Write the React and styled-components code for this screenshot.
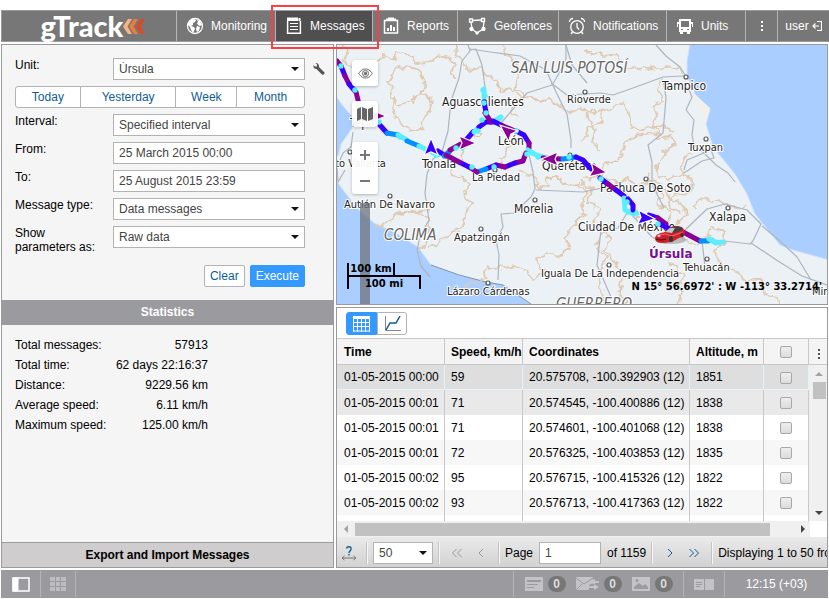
import React, { useState } from 'react';
import styled, { createGlobalStyle, css } from 'styled-components';

const colors = {
  bar: '#777777',
  barActive: '#4f4f4f',
  frame: '#9b9b9f',
  field: '#b3b3b3',
  panel: '#f5f5f5',
  link: '#0f5c96',
  blue: '#3399ff',
  mark: '#fa4141',
};

const GlobalStyle = createGlobalStyle`
  * {
    box-sizing: border-box;
  }
  body {
    margin: 0;
    background: #fff;
    color: #000;
    font: 12px/14px 'Liberation Sans', Arial, sans-serif;
  }
  button, input, select {
    font: inherit;
    margin: 0;
  }
`;

const Page = styled.div`
  display: flex;
  flex-direction: column;
  gap: 2px;
  height: 100vh;
  padding: 10px 0 1px 1px;
`;

/* ---- top bar ---- */

const Header = styled.header`
  display: flex;
  flex: none;
  height: 32px;
  background: ${colors.bar};
  border: solid ${colors.frame};
  border-width: 1px 0 1px 1px;
`;

const Logo = styled.div`
  flex: 1;
  display: flex;
  align-items: center;
  justify-content: center;
  padding-left: 8px;
  color: #fff;
  font: 900 29px/28px Lato, sans-serif;
`;

const Nav = styled.nav`
  display: flex;
`;

const NavItem = styled.a`
  position: relative;
  display: flex;
  align-items: center;
  gap: 7px;
  width: ${p => p.$width}px;
  padding-left: 9px;
  border-left: 1px solid #b5b5b5;
  background: ${p => (p.$active ? colors.barActive : 'transparent')};
  color: #fff;
  text-decoration: none;
  white-space: nowrap;
  svg {
    flex: none;
  }
  ${p =>
    p.$center &&
    css`
      justify-content: center;
      padding: 0;
      gap: 3px;
    `}
`;

const Highlight = styled.span`
  position: absolute;
  inset: -6px -7px -8px -5px;
  border: 2px solid ${colors.mark};
  pointer-events: none;
  z-index: 5;
`;

/* ---- left column ---- */

const Main = styled.main`
  flex: 1;
  min-height: 0;
  display: grid;
  grid-template-columns: 333px minmax(0, 1fr);
  gap: 2px;
  padding-right: 1px;
`;

const Side = styled.aside`
  display: flex;
  flex-direction: column;
  border: 1px solid ${colors.frame};
  background: ${colors.panel};
`;

const Form = styled.form`
  display: grid;
  grid-template-columns: 98px 1fr 28px;
  grid-auto-rows: 22px;
  row-gap: 6px;
  padding: 13px 0 24px 13px;
`;

const Label = styled.label`
  grid-column: 1;
  padding-right: 8px;
`;

const SelectBox = styled.span`
  position: relative;
  display: flex;
  flex: none;
  width: ${p => (p.$width ? `${p.$width}px` : 'auto')};
  height: 22px;
  &::after {
    content: '';
    position: absolute;
    right: 6px;
    top: 9px;
    border: 4px solid transparent;
    border-top-color: #111;
    border-bottom: 0;
    pointer-events: none;
  }
`;

const fieldStyle = css`
  width: 100%;
  height: 22px;
  padding: 0 5px;
  border: 1px solid ${colors.field};
  border-radius: 0;
  background: #fff;
  color: #444;
`;

const Select = styled.select`
  ${fieldStyle}
  appearance: none;
`;

const TextInput = styled.input`
  ${fieldStyle}
`;

const ToolButton = styled.button`
  display: flex;
  align-items: center;
  justify-content: center;
  padding: 0;
  border: 0;
  background: none;
`;

const Periods = styled.div`
  grid-column: 1 / 3;
  display: grid;
  grid-template-columns: 64fr 96fr 61fr 68fr;
  border: 1px solid ${colors.field};
  border-radius: 3px;
  background: #fff;
  button {
    padding: 0;
    border: 0;
    background: none;
    color: ${colors.link};
  }
  button + button {
    border-left: 1px solid ${colors.field};
  }
`;

const Actions = styled.div`
  grid-column: 1 / 3;
  display: flex;
  justify-content: flex-end;
  gap: 5px;
  padding-top: 11px;
`;

const Button = styled.button`
  flex: none;
  height: 22px;
  padding: 0 5px;
  border: 1px solid ${p => (p.$primary ? colors.blue : colors.field)};
  border-radius: 2px;
  background: ${p => (p.$primary ? colors.blue : '#fff')};
  color: ${p => (p.$primary ? '#fff' : colors.link)};
`;

const SectionTitle = styled.h2`
  margin: 0;
  font-size: 12px;
  line-height: 25px;
  text-align: center;
  background: ${colors.frame};
  color: #fff;
`;

const ExportTitle = styled(SectionTitle)`
  margin-top: auto;
  border-top: 1px solid ${colors.frame};
  background: #cfcdce;
  color: #000;
  line-height: 24px;
`;

const Stats = styled.dl`
  display: grid;
  grid-template-columns: 97px 96px;
  margin: 0;
  padding: 10px 13px;
  line-height: 20px;
  white-space: nowrap;
  dd {
    margin: 0;
    text-align: right;
  }
`;

/* ---- map ---- */

const Right = styled.div`
  display: grid;
  grid-template-rows: minmax(0, 1fr) minmax(0, 1fr);
  gap: 2px;
  min-height: 0;
`;

const MapPanel = styled.section`
  position: relative;
  border: 1px solid ${colors.frame};
  overflow: hidden;
`;

const MapDrawing = styled.svg`
  display: block;
  width: 100%;
  height: 100%;
`;

const MapTools = styled.div`
  position: absolute;
  top: 15px;
  left: 15px;
  display: flex;
  flex-direction: column;
  gap: 15px;
`;

const MapToolGroup = styled.div`
  display: flex;
  flex-direction: column;
  width: 26px;
  border-radius: 3px;
  background: rgba(255, 255, 255, 0.93);
  box-shadow: 0 1px 3px rgba(0, 0, 0, 0.25);
  button {
    height: 26px;
  }
`;

const ZoomTrack = styled.div`
  position: absolute;
  left: 23px;
  top: 158px;
  bottom: 0;
  width: 10px;
  background: rgba(110, 115, 125, 0.75);
`;

const Scale = styled.div`
  position: absolute;
  left: 10px;
  bottom: 15px;
  font: bold 10px/11px 'DejaVu Sans', Verdana, sans-serif;
`;

const ScaleKm = styled.div`
  width: 48px;
  height: 12px;
  border: solid #000;
  border-width: 0 2px;
  text-align: center;
`;

const ScaleMi = styled.div`
  width: 74px;
  height: 14px;
  padding-top: 1px;
  border: 2px solid #000;
  border-bottom: 0;
  text-align: center;
`;

const Position = styled.div`
  position: absolute;
  right: 5px;
  bottom: 11px;
  font: bold 10px/12px 'DejaVu Sans', Verdana, sans-serif;
`;

/* ---- messages table ---- */

const TablePanel = styled.section`
  display: flex;
  flex-direction: column;
  min-width: 0;
  border: 1px solid ${colors.frame};
  background: #fff;
`;

const ViewBar = styled.div`
  display: flex;
  flex: none;
  height: 30px;
  padding: 4px 9px;
`;

const ViewButton = styled.button`
  display: flex;
  align-items: center;
  justify-content: center;
  width: ${p => (p.$active ? 31 : 30)}px;
  height: 23px;
  padding: 0;
  border: 1px solid ${p => (p.$active ? colors.blue : colors.field)};
  border-radius: ${p => (p.$active ? '3px 0 0 3px' : '0 3px 3px 0')};
  background: ${p => (p.$active ? colors.blue : '#fff')};
`;

const TableArea = styled.div`
  flex: 1;
  display: flex;
  min-height: 0;
`;

const TableClip = styled.div`
  flex: 1;
  min-width: 0;
  overflow: hidden;
`;

const Table = styled.table`
  width: 100%;
  table-layout: fixed;
  border-collapse: separate;
  border-spacing: 0;
  white-space: nowrap;
  th,
  td {
    padding: 0 0 0 6px;
    border-right: 1px solid #c8c8c8;
    text-align: left;
  }
  th {
    height: 27px;
    border-top: 1px solid #c8c8c8;
    border-bottom: 1px solid #c8c8c8;
    background: #f4f4f4;
  }
  td {
    height: 25px;
  }
  th:first-child,
  td:first-child {
    padding-left: 7px;
  }
  th:last-child,
  td:last-child {
    padding: 0;
    text-align: center;
  }
`;

const Row = styled.tr`
  background: ${p => p.$tone};
  ${p =>
    p.$selected &&
    css`
      td {
        border-bottom: 1px solid #e3f3fc;
        border-right-color: #e3f3fc;
      }
    `}
`;

const Check = styled.input`
  appearance: none;
  display: inline-block;
  width: 12px;
  height: 12px;
  border: 1px solid #a8a8a8;
  border-radius: 2px;
  background: linear-gradient(#eee, #dcdcdc);
  vertical-align: middle;
  &:checked {
    background: ${colors.blue};
  }
`;

const Gutter = styled.div`
  display: flex;
  flex-direction: column;
  width: 18px;
  background: #f0f0f0;
`;

const ColumnMenu = styled.button`
  height: 27px;
  padding: 5px 0 0 2px;
  border: solid #c8c8c8;
  border-width: 1px 0;
  background: #f4f4f4;
  line-height: 0;
`;

const VerticalScroll = styled.div`
  flex: 1;
  display: flex;
  flex-direction: column;
  align-items: center;
  padding: 7px 0 6px 2px;
`;

const VerticalThumb = styled.div`
  width: 13px;
  height: 17px;
  margin: 6px 0 auto;
  background: #c1c1c1;
`;

const Triangle = styled.span`
  width: 0;
  height: 0;
  border: 4px solid transparent;
  ${p => p.$dir === 'up' && 'border-top: 0; border-bottom-color: #a3a3a3;'}
  ${p => p.$dir === 'down' && 'border-bottom: 0; border-top-color: #444;'}
  ${p => p.$dir === 'left' && 'border-left: 0; border-right-color: #a3a3a3;'}
  ${p => p.$dir === 'right' && 'border-right: 0; border-left-color: #444;'}
`;

const HorizontalScroll = styled.div`
  display: flex;
  flex: none;
  align-items: center;
  height: 16px;
  margin-right: 17px;
  padding: 0 5px 0 7px;
  background: #f0f0f0;
`;

const HorizontalThumb = styled.div`
  width: 90%;
  height: 13px;
  margin: 0 auto 0 7px;
  background: #c1c1c1;
`;

const Pager = styled.div`
  display: flex;
  flex: none;
  align-items: center;
  height: 30px;
  padding: 5px 0 3px;
  background: linear-gradient(#eaeaea, #d2d2d2);
  white-space: nowrap;
  overflow: hidden;
`;

const Sep = styled.span`
  flex: none;
  width: 2px;
  height: 22px;
  margin: 0 5px;
  background: linear-gradient(90deg, #c4c4c4 50%, #f6f6f6 50%);
`;

const PageNumber = styled(TextInput)`
  width: 62px;
  margin: 0 6px;
  flex: none;
`;

const PagerButton = styled(ToolButton)`
  flex: none;
  width: 24px;
  height: 22px;
`;

/* ---- status bar ---- */

const StatusBar = styled.footer`
  display: flex;
  flex: none;
  align-items: center;
  height: 28px;
  margin-right: 1px;
  background: ${colors.frame};
  color: #fff;
`;

const StatusCell = styled.div`
  display: flex;
  align-items: center;
  justify-content: center;
  height: 26px;
  width: ${p => p.$width}px;
  gap: 10px;
  border: solid #b5b5b8;
  border-width: ${p => (p.$side === 'right' ? '0 1px 0 0' : '0 0 0 1px')};
`;

const Spacer = styled.div`
  flex: 1;
`;

const CounterButton = styled.button`
  display: flex;
  align-items: center;
  gap: 5px;
  padding: 0;
  border: 0;
  background: none;
`;

const Badge = styled.span`
  width: 18px;
  height: 16px;
  border-radius: 8px;
  background: #777;
  color: #ddd;
  font: bold 12px/16px 'Liberation Sans', Arial, sans-serif;
  text-align: center;
`;

/* ---- icons ---- */

const Chevrons = () => (
  <svg width="22" height="15" viewBox="0 0 22 15">
    <path d="M0 7.500 5 0h4L4.500 7.500 9 15H5z" fill="#f6b48a" />
    <path d="M6 7.500 11 0h4l-4.500 7.500L15 15h-4z" fill="#ef7b3c" />
    <path d="M13 7.500 18 0h4l-4.500 7.500L22 15h-4z" fill="#dd4a22" />
  </svg>
);

const GlobeIcon = () => (
  <svg width="18" height="18" viewBox="0 0 18 18">
    <circle cx="9" cy="9" r="7.500" fill="none" stroke="#fff" strokeWidth="1.300" />
    <path
      d="M2 6c1-2 3-4 6-4l2 1-1 2-2 1v2L5 9l3 1 1 2-2 4-2-3-1-3-2-2zM11 3l3 1 2 4-2 1-2-1-1-2 1-1zM11 9l3 1-1 4-2 1-1-3z"
      fill="#fff"
    />
  </svg>
);

const MessagesIcon = () => (
  <svg width="18" height="18" viewBox="0 0 18 18" fill="none" stroke="#fff">
    <path d="M2 1.500h11M2 3h11M14.500 1v3" strokeWidth="2" />
    <path d="M2.600 4v12.300h12.800V4" strokeWidth="1.500" />
    <path d="M5 6.500h8M5 9.500h8M5 12.500h8" strokeWidth="1.200" />
  </svg>
);

const ReportsIcon = () => (
  <svg width="18" height="18" viewBox="0 0 18 18" fill="none" stroke="#fff">
    <path d="M2.500 3.500h13v12.500h-13z" strokeWidth="1.500" />
    <path d="M4 2.500h10M6 1.500h6" strokeWidth="2" />
    <path d="M6 14v-3M9 14V8M12 14v-4" strokeWidth="2" />
  </svg>
);

const GeofencesIcon = () => (
  <svg width="20" height="18" viewBox="0 0 20 18" fill="none" stroke="#fff" strokeWidth="1.300">
    <path d="M5 3.500l9-.5M4 5l1 7 5 4 6-4 1-7" />
    <path d="M2.500 2h3v3h-3zM14.500 1.500h3v3h-3z" fill={colors.bar} />
    <circle cx="4.500" cy="12" r="1.500" fill="#fff" />
    <circle cx="10" cy="16" r="1" fill="#fff" />
    <circle cx="16.500" cy="12" r="1.500" fill="#fff" />
  </svg>
);

const AlarmIcon = () => (
  <svg width="18" height="18" viewBox="0 0 18 18" fill="none" stroke="#fff" strokeWidth="1.300">
    <circle cx="9" cy="10" r="6.300" />
    <path d="M9 6v4l2 2.500M1.500 5c0-2 1.500-3.500 3.500-3.500M16.500 5c0-2-1.500-3.500-3.500-3.500M4.500 15 3 17M13.500 15l1.500 2" />
  </svg>
);

const BusIcon = () => (
  <svg width="18" height="18" viewBox="0 0 18 18">
    <path
      d="M3 2h12v3h2v5h-1V7h-1v8h-1v2h-3v-2H7v2H4v-2H3V7H2v3H1V5h2zm2 2v6h8V4zm0 8v1h2v-1zm6 0v1h2v-1z"
      fill="#fff"
      fillRule="evenodd"
    />
  </svg>
);

const DotsIcon = ({ color }) => (
  <svg width="4" height="14" viewBox="0 0 4 14" fill={color}>
    <path d="M1 2h2v2H1zM1 6h2v2H1zM1 10h2v2H1z" />
  </svg>
);

const LogoutIcon = () => (
  <svg width="10" height="12" viewBox="0 0 10 12" fill="none" stroke="#fff">
    <path d="M5 1.500h4.500v9H5M7 6H1M3.500 3.500 1 6l2.500 2.500" strokeWidth="1.200" />
  </svg>
);

const WrenchIcon = () => (
  <svg width="14" height="14" viewBox="0 0 14 14">
    <path
      d="M3.500 1 5 2.500V4.500H3L1.500 3C1 5 2 7 4.500 7L10 12.500c1.500 1 3-.5 2.500-2L7 5C7.500 2.500 5.500 1 3.500 1z"
      fill="#555"
    />
  </svg>
);

const EyeIcon = () => (
  <svg width="15" height="11" viewBox="0 0 15 11" fill="none" stroke="#666">
    <path d="M.7 5.500C3 2 5 1 7.500 1s4.500 1 6.800 4.500C12 9 10 10 7.500 10S3 9 .7 5.500z" />
    <circle cx="7.500" cy="5.500" r="3" />
    <circle cx="7.500" cy="5.500" r="1.200" fill="#666" />
  </svg>
);

const LayersIcon = () => (
  <svg width="16" height="14" viewBox="0 0 16 14" fill="#666">
    <path d="M0 2l4-2v12l-4 2zM5 0l5 2v12l-5-2zM11 2l5-2v12l-5 2z" />
  </svg>
);

const GridIcon = () => (
  <svg width="17" height="16" viewBox="0 0 17 16" fill="none" stroke="#fff">
    <path d="M0 1.500h17" strokeWidth="3" />
    <path d="M0 6.500h17M0 10.500h17M0 15h17M.5 0v16M4.500 0v16M8.500 0v16M12.500 0v16M16.500 0v16" />
  </svg>
);

const ChartIcon = () => (
  <svg width="17" height="16" viewBox="0 0 17 16" fill="none" stroke={colors.link}>
    <path d="M1.500 0v14.500H17" stroke="#888" />
    <path d="M2 14l4-7h6l4-7" strokeWidth="1.500" />
  </svg>
);

const AngleIcon = ({ double, flip, color }) => (
  <svg width="12" height="10" viewBox="0 0 12 10" fill="none" stroke={color}>
    <path
      d={double ? 'M5.500 1l-4 4 4 4M10.500 1l-4 4 4 4' : 'M8 1L4 5l4 4'}
      transform={flip ? 'matrix(-1 0 0 1 12 0)' : undefined}
    />
  </svg>
);

const HelpWidthIcon = () => (
  <svg width="16" height="16" viewBox="0 0 16 16" fill="none">
    <path d="M5.500 3.500C6 1 10.500 1 10 4c0 2-2 2-2 4M8 9v1.500" stroke={colors.link} strokeWidth="1.400" />
    <path d="M1 13h14M3.500 11 1 13l2.500 2M12.500 11l2.500 2-2.500 2" stroke="#777" />
  </svg>
);

/* ---- map contents ---- */

const borders = [
  'M342 45l6 7-5 8 8 6 11 4 13-7 10-9 9 6 4-8 10 3 8 8 13-1 7-7 13 2 5 9-4 7 6 5',
  'M398 68l10-3 10 5 7 11-4 13-10 8-12 4-8-9-1-17z',
  'M420 92l12 10-3 12-9 7 4 8-10 2-13-8-8-10 2-17',
  'M456 46l-1 9 9 5 4 10 13-2 5 7 11 4 3 12 12-2 8 9-9 12 7 8',
  'M503 45l3 10 10 8 4 12-4 14 8 5-3 10',
  'M520 98l10-3 10 7 9-3 12 8 9 6 12-4 8 9 5 13-3 11 8 8',
  'M584 49l8 5 8-3 5 6 12-2 3 8',
  'M626 68l15 1 8-3 11 4 8-4 12 4 3 7',
  'M660 78l-2 13 5 10-10 4 5 12-6 8 8 8-2 5 15-1 3 8-12 8-8 12 2 13 6-2 5 5 12-8 2-12 8-7',
  'M580 106l9 8 7-4 10 2 8-6 10-4 5 12 3 13 9 2 14-3 12 2 8 5',
  'M600 110l3 12-15 5 1 8-9 6M658 133l-22 3-10 5-7 20-12 2-8 13-16 2',
  'M450 175l13 2 7 7-7 12 8 8-7 10 0 14-14 4-12 13-9 1M430 210l-14 2-14 0-14 11-14 2',
  'M416 211l11 8 3 14-7 14-6 3M517 172l16 4 7 12 9-1-2-10 12 0 5 9 16-1 8 6-7 13 5 10-12 10-9 13 6 12-12 8-12-4-11 7 8 11-12 9-5-10-13-4-9 2-6-3-4 5-8-4-3 14-17 4-1 9',
  'M580 181l12 9-4 14 13 5-7 14 10 8-8 14 11 13-9 18 6 28',
  'M606 178l10 5 12-5 12 9 11-7 10 5 9 14 13 4 3 12-10 9-12 4-9-13-17 3',
  'M648 172l5 13 9 9-5 11 14 8-4 11 11 4M680 173l9 4 5 10-7 8-10-2-9 9 4 8 10 2',
  'M592 222l12 6 6 13-6 8 12 15 6 13-2 16 7 14M682 237l14 8 9-3 6-14 12 2 2 12-10 10 9 16 10 2 12 10 14 1 7 14 11 3 2 12',
  'M667 263l9 2 9 10-8 10 6 7-6 13M747 205l-11 5-8-7-14-1-12-5-8 9',
  'M480 132l-12 9-6 14 4 10M450 175l2-12M503 172l-2-14 9-12 6-3',
];

const roads = [
  'M468 45l2 6-8 10-3 17-8 23-3 30-6 21-9 7-6 15-2 19 4 27-9 16-3 14 4 16 9 11',
  'M470 50l6-1 6 16 3 22-1 17',
  'M470 49l20 3 30 4 26 14 10 22 11 22 4 26 0 8M566 45l0 14-9 18-5 8-25 8-26 30',
  'M551 83l16 12 34-2 12 2 20-7 30-11 20-1M566 45l6 20 15 18M656 45l10 11 14 11 7 11',
  'M688 87l4 10-6 13 8 10-2 15 2 10 10 8 12 12 12 8 7 9',
  'M663 80l3 18-3 35-15 12 4 17 0 22 12 24',
  'M529 155l4 17 2 17-4 8-17 16-13 1 2 13-7 13 3 15-1 25M536 190l47 2 19-4 22 7',
  'M685 230l22-21 18-5 22 6 14 14-8 17-3 3-26-3-28-3M751 243l27 18 24 15 25 9',
  'M762 226l18 15 17 16 14 23M627 213l-9 15-17 2-4 35 14 32',
  'M632 215l20 22 13 6 12-14M702 241l3 26M684 173l18-12 12-3-3-8-24 10-3 10',
  'M345 170l-7 12-1-15 6-14 8-6 2-15',
];

const track = [
  ['#8b0096', 'M337 61l4 5'],
  ['#3a00ff', 'M341 66l4 10'],
  ['#8b0096', 'M345 76l4 8'],
  ['#3a00ff', 'M349 84l6 7'],
  ['#8b0096', 'M356 92l3 12'],
  ['#5beeff', 'M359 104l6 9'],
  ['#3a00ff', 'M378 123l9 10'],
  ['#0090ff', 'M387 133l11 2'],
  ['#5beeff', 'M398 135l9 5'],
  ['#0090ff', 'M407 141l12 5'],
  ['#5beeff', 'M419 146l19 9'],
  ['#3a00ff', 'M438 151l8 5'],
  ['#0090ff', 'M444 156l6-5'],
  ['#8b0096', 'M450 150l11-6'],
  ['#3a00ff', 'M466 140l7-8'],
  ['#5beeff', 'M474 132l4-4'],
  ['#3a00ff', 'M479 127l7-5h9'],
  ['#8b0096', 'M491 122l-6-9'],
  ['#3a00ff', 'M486 112l-2-10'],
  ['#5beeff', 'M484 97v-8'],
  ['#5beeff', 'M496 120l5-3'],
  ['#3a00ff', 'M493 121l10 5'],
  ['#8b0096', 'M503 126l12 5'],
  ['#3a00ff', 'M516 131l8 4 5 8'],
  ['#8b0096', 'M529 143v5'],
  ['#5beeff', 'M528 150l6 4 9 3'],
  ['#8b0096', 'M543 158l18 1'],
  ['#0090ff', 'M563 159l13-2'],
  ['#3a00ff', 'M576 157l7 3 7 8 7 5'],
  ['#8b0096', 'M526 153l-3 8-8 2'],
  ['#3a00ff', 'M515 163l-10 4'],
  ['#8b0096', 'M505 167l-9-2'],
  ['#3a00ff', 'M496 165l-10 4'],
  ['#0090ff', 'M486 169l-9 3'],
  ['#8b0096', 'M477 172l-8-5'],
  ['#3a00ff', 'M469 167l-10-5'],
  ['#8b0096', 'M459 162l-13-7'],
  ['#3a00ff', 'M600 178l8 6'],
  ['#8b0096', 'M608 184l8 6'],
  ['#3a00ff', 'M616 190l8 6'],
  ['#5beeff', 'M624 198l1 12 9 4'],
  ['#3a00ff', 'M628 199l5 6 0 5'],
  ['#3a00ff', 'M649 215l9 3'],
  ['#8b0096', 'M658 218l8 6'],
  ['#3a00ff', 'M660 224l8 4'],
  ['#8b0096', 'M683 232l17 9'],
  ['#0090ff', 'M701 241h7'],
  ['#5beeff', 'M709 239l7 4 7-1'],
];

const lightDots = [
  [341, 66], [355, 90], [462, 148], [484, 103], [486, 113], [478, 131], [516, 131],
  [482, 120], [532, 153], [472, 167], [494, 167], [601, 179], [712, 240], [436, 155],
  [379, 122], [400, 137], [500, 118], [527, 154], [538, 157], [456, 148], [569, 157],
  [627, 202], [628, 212], [637, 213], [658, 224], [483, 90], [485, 96],
];

const arrows = [
  { x: 431, y: 147, turn: 0, color: '#3a00ff' },
  { x: 467, y: 143, turn: 90, color: '#8b0096' },
  { x: 507, y: 131, turn: -50, color: '#8b0096' },
  { x: 550, y: 159, turn: -90, color: '#8b0096' },
  { x: 598, y: 171, turn: 100, color: '#8b0096' },
  { x: 646, y: 218, turn: 95, color: '#3a00ff' },
  { x: 377, y: 116, turn: 90, color: '#8b0096' },
];

const towns = [
  [585, 92], [686, 77], [706, 139], [535, 200], [481, 229], [390, 196], [646, 179],
  [728, 208], [609, 265], [707, 259], [488, 283], [570, 155], [350, 152], [495, 170],
];

const places = [
  { x: 442, y: 106, name: 'Aguascalientes', big: true },
  { x: 567, y: 103, name: 'Rioverde' },
  { x: 662, y: 90, name: 'Tampico', big: true },
  { x: 688, y: 151, name: 'Tuxpan' },
  { x: 498, y: 145, name: 'León', big: true },
  { x: 542, y: 170, name: 'Querétaro', big: true },
  { x: 472, y: 181, name: 'La Piedad' },
  { x: 422, y: 168, name: 'Tonalá', big: true },
  { x: 313, y: 167, name: 'Puerto Vallarta' },
  { x: 350, y: 127, name: 'Tepic', big: true },
  { x: 344, y: 208, name: 'Autlán De Navarro' },
  { x: 514, y: 213, name: 'Morelia', big: true },
  { x: 454, y: 241, name: 'Apatzingán' },
  { x: 600, y: 192, name: 'Pachuca De Soto', big: true },
  { x: 578, y: 231, name: 'Ciudad De México', big: true },
  { x: 709, y: 221, name: 'Xalapa', big: true },
  { x: 541, y: 277, name: 'Iguala De La Independencia' },
  { x: 683, y: 271, name: 'Tehuacán' },
  { x: 447, y: 295, name: 'Lázaro Cárdenas' },
  { x: 812, y: 295, name: 'Minatitlán' },
];

const states = [
  { x: 511, y: 73, name: 'SAN LUIS POTOSÍ' },
  { x: 384, y: 240, name: 'COLIMA' },
  { x: 556, y: 309, name: 'GUERRERO' },
];

const PlaceName = styled.text`
  font: ${p => (p.$big ? 12 : 11)}px 'DejaVu Sans Condensed', 'DejaVu Sans', sans-serif;
  fill: #222;
  stroke: #fff;
  stroke-width: 2px;
  stroke-linejoin: round;
  paint-order: stroke;
`;

const StateName = styled(PlaceName)`
  font-size: 15px;
  font-style: italic;
  fill: #666;
`;

const UnitName = styled(PlaceName)`
  font: bold 12px 'DejaVu Sans', Verdana, sans-serif;
  fill: #7a0a94;
`;

const Car = () => (
  <g transform="translate(655 225)">
    <ellipse cx="16" cy="15" rx="15" ry="4" fill="#888" opacity="0.5" />
    <path d="M0 13C1 9 5 8 10 7l4-4c4-2 10-3 14 0l2 4-1 4-5 2-7 4-9 1c-5 0-8-1-8-5z" fill="#d2202a" />
    <path d="M10 7l5-4c4-2 9-2 12 0l1 2-9 3z" fill="#46413f" />
    <path d="M10 7l5-4 5 0-3 5z" fill="#c3ccd0" />
    <path d="M2 10l8-1 7 2 11-4" stroke="#f2686a" fill="none" />
    <path d="M1 14l5 1 5-1" stroke="#701016" strokeWidth="1.500" fill="none" />
    <ellipse cx="16" cy="14" rx="2" ry="3" fill="#333" />
    <ellipse cx="27" cy="10" rx="1.500" ry="2.500" fill="#333" />
    <path d="M2 11l2-1 2 1-2 1z" fill="#fff" />
  </g>
);

const TrackMap = () => (
  <MapDrawing viewBox="337 45 491 259" preserveAspectRatio="xMinYMin slice" role="img" aria-label="Track map">
    <filter id="rugged" x="-10%" y="-10%" width="120%" height="120%">
      <feTurbulence type="fractalNoise" baseFrequency="0.13" numOctaves="2" seed="4" />
      <feDisplacementMap in="SourceGraphic" scale="9" xChannelSelector="R" yChannelSelector="G" />
    </filter>
    <path fill="#ebf1f4" d="M337 45h491v259H337z" />
    <g fill="#aaceff" stroke="#cfe4fb" strokeWidth="1">
      <path d="M336 96l7 10 9 10 1 11-7 10-5 7-2 10-3 4z" />
      <path d="M336 180l7 10 16 20 15 13 22 10 22 14 13 18 28 10 27 7 17 3 28 19v2H336z" />
      <path d="M690 44l-3 17v15l8 18 15 15-4 15 7 23 22 27 12 20 8 20 12 15 13 16 13 5 36 10V44z" />
    </g>
    <path d="M431 265l28 10 27 7 17 3 28 19" fill="none" stroke="#7f93a8" />
    <path d="M693 93l17 15-4 15z" fill="#f2f0eb" />
    <g fill="none" stroke="#e0cab2" strokeWidth="1.800" strokeLinejoin="round" filter="url(#rugged)">
      {borders.map(d => <path key={d} d={d} />)}
    </g>
    <g fill="none" stroke="#adb5c0" strokeWidth="1.200" strokeLinejoin="round">
      {roads.map(d => <path key={d} d={d} />)}
    </g>
    <g fill="#fff" stroke="#555" strokeWidth="1.200">
      {towns.map(([x, y]) => <circle key={`${x}-${y}`} cx={x} cy={y} r="2" />)}
    </g>
    {places.map(p => (
      <PlaceName key={p.name} x={p.x} y={p.y} $big={p.big}>{p.name}</PlaceName>
    ))}
    {states.map(p => (
      <StateName key={p.name} x={p.x} y={p.y}>{p.name}</StateName>
    ))}
    <g fill="none" strokeWidth="5" strokeLinecap="round" strokeLinejoin="round">
      {track.map(([color, d]) => <path key={d} d={d} stroke={color} />)}
    </g>
    <g fill="#5beeff">
      {lightDots.map(([x, y]) => <circle key={`${x}-${y}`} cx={x} cy={y} r="2.700" />)}
    </g>
    {arrows.map(a => (
      <path
        key={a.x}
        d="M0-9 7 8 0 5-7 8z"
        fill={a.color}
        stroke="#fff"
        strokeWidth="1.200"
        transform={`translate(${a.x} ${a.y}) rotate(${a.turn})`}
      />
    ))}
    <Car />
    <UnitName x="649" y="258">Úrsula</UnitName>
  </MapDrawing>
);

/* ---- data ---- */

const navItems = [
  { title: 'Monitoring', width: 99, Icon: GlobeIcon },
  { title: 'Messages', width: 97, Icon: MessagesIcon, active: true },
  { title: 'Reports', width: 85, Icon: ReportsIcon },
  { title: 'Geofences', width: 101, Icon: GeofencesIcon },
  { title: 'Notifications', width: 108, Icon: AlarmIcon },
  { title: 'Units', width: 79, Icon: BusIcon },
];

const stats = [
  ['Total messages:', '57913'],
  ['Total time:', '62 days 22:16:37'],
  ['Distance:', '9229.56 km'],
  ['Average speed:', '6.11 km/h'],
  ['Maximum speed:', '125.00 km/h'],
];

const messages = [
  ['01-05-2015 00:00', '59', '20.575708, -100.392903 (12)', '1851'],
  ['01-05-2015 00:01', '71', '20.574545, -100.400886 (12)', '1838'],
  ['01-05-2015 00:01', '71', '20.574601, -100.401068 (12)', '1838'],
  ['01-05-2015 00:01', '72', '20.576325, -100.403853 (12)', '1835'],
  ['01-05-2015 00:02', '95', '20.576715, -100.415326 (12)', '1822'],
  ['01-05-2015 00:02', '93', '20.576713, -100.417363 (12)', '1822'],
];

const rowTone = index => {
  if (index === 0) return '#dedede';
  if (index === 1) return '#e9e9e9';
  return index % 2 ? '#f7f7f7' : '#fff';
};

const Dropdown = ({ id, value, width, label }) => (
  <SelectBox $width={width}>
    <Select id={id} defaultValue={value} aria-label={label}>
      <option>{value}</option>
    </Select>
  </SelectBox>
);

const MessagesForm = () => (
  <Form onSubmit={e => e.preventDefault()}>
    <Label htmlFor="unit">Unit:</Label>
    <Dropdown id="unit" value="Úrsula" />
    <ToolButton type="button" aria-label="Unit properties">
      <WrenchIcon />
    </ToolButton>
    <Periods>
      <button type="button">Today</button>
      <button type="button">Yesterday</button>
      <button type="button">Week</button>
      <button type="button">Month</button>
    </Periods>
    <Label htmlFor="interval">Interval:</Label>
    <Dropdown id="interval" value="Specified interval" />
    <Label htmlFor="from">From:</Label>
    <TextInput id="from" defaultValue="25 March 2015 00:00" />
    <Label htmlFor="to">To:</Label>
    <TextInput id="to" defaultValue="25 August 2015 23:59" />
    <Label htmlFor="type">Message type:</Label>
    <Dropdown id="type" value="Data messages" />
    <Label htmlFor="params">Show parameters as:</Label>
    <Dropdown id="params" value="Raw data" />
    <Actions>
      <Button type="button">Clear</Button>
      <Button type="submit" $primary>Execute</Button>
    </Actions>
  </Form>
);

const MessagesTable = () => (
  <Table>
    <colgroup>
      <col style={{ width: 108 }} />
      <col style={{ width: 78 }} />
      <col />
      <col style={{ width: 74 }} />
      <col style={{ width: 45 }} />
    </colgroup>
    <thead>
      <tr>
        <th>Time</th>
        <th>Speed, km/h</th>
        <th>Coordinates</th>
        <th>Altitude, m</th>
        <th><Check type="checkbox" aria-label="Select all" /></th>
      </tr>
    </thead>
    <tbody>
      {messages.map((cells, i) => (
        <Row key={i} $tone={rowTone(i)} $selected={i === 0}>
          {cells.map((cell, j) => <td key={j}>{cell}</td>)}
          <td><Check type="checkbox" aria-label={`Select row ${i + 1}`} /></td>
        </Row>
      ))}
      <Row $tone="#fff">
        <td /><td /><td /><td /><td />
      </Row>
    </tbody>
  </Table>
);

const MessagesPager = () => {
  const [page, setPage] = useState('1');
  return (
    <Pager>
      <PagerButton aria-label="Fit columns"><HelpWidthIcon /></PagerButton>
      <Sep />
      <Dropdown value="50" width={60} label="Rows per page" />
      <Sep />
      <PagerButton aria-label="First page"><AngleIcon double color="#999" /></PagerButton>
      <PagerButton aria-label="Previous page"><AngleIcon color="#999" /></PagerButton>
      <Sep />
      <label htmlFor="page">Page</label>
      <PageNumber id="page" value={page} onChange={e => setPage(e.target.value)} />
      of 1159
      <Sep />
      <PagerButton aria-label="Next page"><AngleIcon flip color={colors.link} /></PagerButton>
      <PagerButton aria-label="Last page"><AngleIcon double flip color={colors.link} /></PagerButton>
      <Sep />
      Displaying 1 to 50 from 57913
    </Pager>
  );
};

const App = () => (
  <Page>
    <GlobalStyle />
    <Header>
      <Logo>gTrack<Chevrons /></Logo>
      <Nav>
        {navItems.map(({ title, width, Icon, active }) => (
          <NavItem key={title} href="#" $width={width} $active={active}>
            <Icon />
            {title}
            {active && <Highlight />}
          </NavItem>
        ))}
        <NavItem href="#" $width={32} $center aria-label="More">
          <DotsIcon color="#fff" />
        </NavItem>
        <NavItem href="#" $width={52} $center>
          user
          <LogoutIcon />
        </NavItem>
      </Nav>
    </Header>

    <Main>
      <Side>
        <MessagesForm />
        <SectionTitle>Statistics</SectionTitle>
        <Stats>
          {stats.map(([name, value]) => (
            <React.Fragment key={name}>
              <dt>{name}</dt>
              <dd>{value}</dd>
            </React.Fragment>
          ))}
        </Stats>
        <ExportTitle>Export and Import Messages</ExportTitle>
      </Side>

      <Right>
        <MapPanel>
          <TrackMap />
          <ZoomTrack />
          <MapTools>
            <MapToolGroup>
              <ToolButton aria-label="Visible layers"><EyeIcon /></ToolButton>
            </MapToolGroup>
            <MapToolGroup>
              <ToolButton aria-label="Map source"><LayersIcon /></ToolButton>
            </MapToolGroup>
            <MapToolGroup>
              <ToolButton aria-label="Zoom in">
                <svg width="10" height="10" stroke="#777" strokeWidth="2"><path d="M0 5h10M5 0v10" /></svg>
              </ToolButton>
              <ToolButton aria-label="Zoom out">
                <svg width="10" height="10" stroke="#777" strokeWidth="2"><path d="M0 5h10" /></svg>
              </ToolButton>
            </MapToolGroup>
          </MapTools>
          <Scale>
            <ScaleKm>100 km</ScaleKm>
            <ScaleMi>100 mi</ScaleMi>
          </Scale>
          <Position>N 15° 56.6972' : W -113° 33.2714'</Position>
        </MapPanel>

        <TablePanel>
          <ViewBar>
            <ViewButton $active aria-label="Table"><GridIcon /></ViewButton>
            <ViewButton aria-label="Chart"><ChartIcon /></ViewButton>
          </ViewBar>
          <TableArea>
            <TableClip>
              <MessagesTable />
            </TableClip>
            <Gutter>
              <ColumnMenu aria-label="Columns"><DotsIcon color="#555" /></ColumnMenu>
              <VerticalScroll>
                <Triangle $dir="up" />
                <VerticalThumb />
                <Triangle $dir="down" />
              </VerticalScroll>
            </Gutter>
          </TableArea>
          <HorizontalScroll>
            <Triangle $dir="left" />
            <HorizontalThumb />
            <Triangle $dir="right" />
          </HorizontalScroll>
          <MessagesPager />
        </TablePanel>
      </Right>
    </Main>

    <StatusBar>
      <StatusCell $side="right" $width={40}>
        <svg width="18" height="15" fill="none" stroke="#fff">
          <path d="M1 1h16v13H1z" strokeWidth="1.500" />
          <path d="M1 1h5v13H1z" fill="#fff" />
        </svg>
      </StatusCell>
      <StatusCell $side="right" $width={35}>
        <svg width="16" height="14" fill="#bdbdc0">
          <path d="M0 0h5v4H0zM6 0h4v4H6zM11 0h5v4h-5zM0 5h5v4H0zM6 5h4v4H6zM11 5h5v4h-5zM0 10h5v4H0zM6 10h4v4H6zM11 10h5v4h-5z" />
        </svg>
      </StatusCell>
      <Spacer />
      <StatusCell $width={170}>
        <CounterButton aria-label="Notifications">
          <svg width="18" height="14" fill="#c4c4c6">
            <path d="M0 0h18v14H0zM2 3v2h14V3zM2 7v1h11V7zM2 10v1h7v-1z" fillRule="evenodd" />
          </svg>
          <Badge>0</Badge>
        </CounterButton>
        <CounterButton aria-label="Messages">
          <svg width="23" height="14" fill="#c4c4c6">
            <path d="M0 0h17v6l-4 2v5H0z" />
            <path d="M0 1l8 6 9-6M0 13l6-6" fill="none" stroke="#9b9b9f" />
            <path d="M14 5l5-3v2h4v2h-4v2zM23 10l-5-3v2h-5v2h5v2z" />
          </svg>
          <Badge>0</Badge>
        </CounterButton>
        <CounterButton aria-label="Media">
          <svg width="18" height="14" fill="#c4c4c6">
            <path d="M0 0h18v14H0zM2 12h14v-2l-3-3-2 2-4-3-5 4zM5 2a1.500 1.500 0 100 3 1.500 1.500 0 000-3z" fillRule="evenodd" />
          </svg>
          <Badge>0</Badge>
        </CounterButton>
      </StatusCell>
      <StatusCell $width={41}>
        <svg width="20" height="11" fill="#c4c4c6">
          <path d="M0 0h10v11H0zM2 3v1h6V3zM2 5v1h6V5zM2 7v1h4V7zM11 0h9v11h-9z" fillRule="evenodd" />
        </svg>
      </StatusCell>
      <StatusCell $width={104}>12:15 (+03)</StatusCell>
    </StatusBar>
  </Page>
);

export default App;
